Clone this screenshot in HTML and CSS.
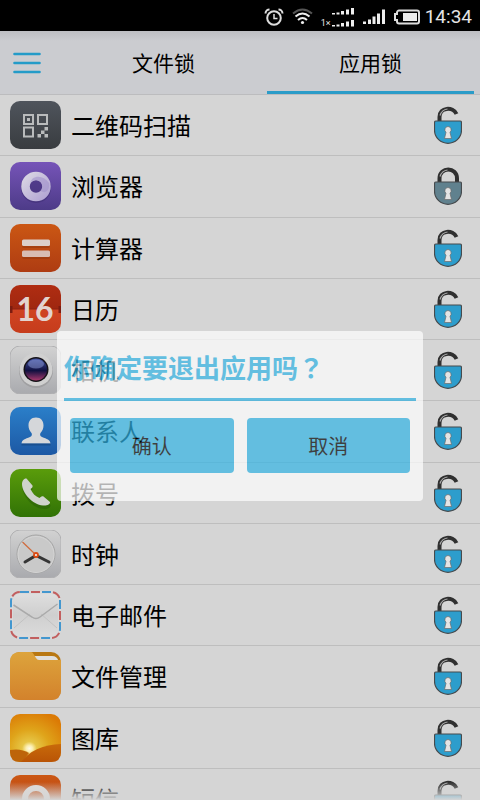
FILE: index.html
```
<!DOCTYPE html>
<html lang="zh-CN">
<head>
    <meta charset="UTF-8">
    <meta name="viewport" content="width=device-width, initial-scale=1.0">
    <title>应用锁</title>
    <link rel="stylesheet" href="styles.css">
</head>
<body>
    <div class="screen">
        <div class="status-bar">
            <svg class="status-alarm" width="20" height="18" viewBox="0 0 20 18" fill="none" stroke="#ddd" stroke-width="2">
                <circle cx="10" cy="10" r="6.8"/>
                <path d="M10 6v4.5h3.5" stroke-width="1.5"/>
                <path d="M1.5 5.5C1.5 3 3.5 1.5 5.5 1.5M18.5 5.5C18.5 3 16.5 1.5 14.5 1.5"/>
            </svg>
            <svg class="status-wifi" width="21" height="17" viewBox="0 0 21 17" fill="none" stroke="#eee" stroke-width="2">
                <path d="M1 5.5Q10.5-2.5 20 5.5" stroke="#555"/>
                <path d="M3.5 8.5Q10.5 2.5 17.5 8.5"/>
                <path d="M6 12Q10.5 8 15 12"/>
                <circle cx="10.5" cy="14.5" r="1.6" fill="#eee" stroke="none"/>
            </svg>
            <div class="dual-signal">
                <span class="network">1×</span>
                <svg width="24" height="20" viewBox="0 0 24 20" fill="#eee">
                    <path d="M1 6h3v1.5H1zM5.5 5.5h3v2h-3zM10 4h3v3.5h-3zM15 2.5h3v5h-3zM20 1h3v6.5h-3z"/>
                    <path d="M1 18h3v1.5H1zM5.5 17.5h3v2h-3zM10 16h3v3.5h-3zM15 14.5h3v5h-3zM20 13h3v6.5h-3z"/>
                </svg>
            </div>
            <svg class="status-signal" width="23" height="17" viewBox="0 0 23 17" fill="#eee">
                <path d="M0 13.5h3V16H0zM5 11.5h3V16H5zM9.5 8.5h3V16h-3zM14 5.5h3V16h-3zM19 1.5h3V16h-3z"/>
            </svg>
            <svg class="status-battery" width="26" height="16" viewBox="0 0 26 16">
                <path d="M5 1.5h18a2 2 0 0 1 2 2v9a2 2 0 0 1-2 2H5a2 2 0 0 1-2-2V11H1V5h2V3.5a2 2 0 0 1 2-2z" fill="none" stroke="#ddd" stroke-width="2"/>
                <path d="M9 4h14v8H9z" fill="#eee"/>
            </svg>
            <span class="clock">14:34</span>
        </div>

        <header class="header">
            <button class="menu-btn" type="button" aria-label="菜单">
                <svg width="28" height="22" viewBox="0 0 28 22" stroke="#249bc8" stroke-width="2.6" stroke-linecap="round">
                    <path d="M1.5 2h25M1.5 11h25M1.5 20h25"/>
                </svg>
            </button>
            <nav class="tabs">
                <button class="tab" type="button">文件锁</button>
                <button class="tab active" type="button">应用锁</button>
            </nav>
        </header>

        <main class="content">
            <ul class="app-list">
                <li class="app">
                    <svg class="app-icon" viewBox="0 0 51 48">
                        <rect class="tile" fill="url(#g-scan)"/>
                        <g fill="none" stroke="#b9bbbc" stroke-width="2">
                            <path d="M14 14h9v9h-9zM28 14h9v9h-9zM14 26.5h9v9h-9z"/>
                        </g>
                        <path d="M17 17h3v3h-3zM34.5 26H38v3.500h-3.500zM31 29.500h3.500V33H31zM27.500 33H31v3.500h-3.500zM34.500 33H38v3.500h-3.500z" fill="#b9bbbc"/>
                    </svg>
                    <span class="app-name">二维码扫描</span>
                    <button class="lock" type="button" aria-label="加锁"><svg viewBox="0 0 28 38"><use href="#unlocked"/></svg></button>
                </li>
                <li class="app">
                    <svg class="app-icon" viewBox="0 0 51 48">
                        <rect class="tile" fill="url(#g-browser)"/>
                        <circle cx="26" cy="26" r="15" fill="#3b2b70" opacity=".5"/>
                        <circle cx="26" cy="24.500" r="10.500" fill="none" stroke="url(#g-ring)" stroke-width="8.500"/>
                        <path d="M20 22C21 13 33 12 39 21C40 29 35 32 30.500 29C34 25 32 18 26 18C23 18 21 19 20 22z" fill="#a293cc" opacity=".6"/>
                    </svg>
                    <span class="app-name">浏览器</span>
                    <button class="lock" type="button" aria-label="解锁"><svg viewBox="0 0 28 38"><use href="#locked"/></svg></button>
                </li>
                <li class="app">
                    <svg class="app-icon" viewBox="0 0 51 48">
                        <rect class="tile" fill="url(#g-calc)"/>
                        <rect x="12" y="17" width="28" height="7" rx="2" fill="#8f3510" opacity=".5"/>
                        <rect x="12" y="28" width="28" height="7" rx="2" fill="#8f3510" opacity=".5"/>
                        <rect x="12" y="15.500" width="28" height="6.500" rx="1.500" fill="#dccfca"/>
                        <rect x="12" y="26.500" width="28" height="6.500" rx="1.500" fill="#d8bcb3"/>
                    </svg>
                    <span class="app-name">计算器</span>
                    <button class="lock" type="button" aria-label="加锁"><svg viewBox="0 0 28 38"><use href="#unlocked"/></svg></button>
                </li>
                <li class="app">
                    <svg class="app-icon" viewBox="0 0 51 48">
                        <rect class="tile" fill="url(#g-calendar)"/>
                        <path d="M0 24h51" stroke="#8d2212"/>
                        <path d="M0 21h2.500v7H0zM48.500 21H51v7h-2.500z" fill="#7c1c10"/>
                        <text class="calendar-day" x="25" y="36">16</text>
                    </svg>
                    <span class="app-name">日历</span>
                    <button class="lock" type="button" aria-label="加锁"><svg viewBox="0 0 28 38"><use href="#unlocked"/></svg></button>
                </li>
                <li class="app">
                    <svg class="app-icon" viewBox="0 0 51 48">
                        <rect class="tile" fill="url(#g-silver)" stroke="#b0b0b2"/>
                        <circle cx="26" cy="25" r="17" fill="#a0a0a2"/>
                        <circle cx="26" cy="23.500" r="16.500" fill="#d0d0d0"/>
                        <circle cx="26" cy="23.500" r="12.500" fill="#151218"/>
                        <circle cx="26" cy="23.500" r="11" fill="url(#g-lens)"/>
                        <ellipse cx="26" cy="18" rx="8" ry="4.500" fill="#8d9bd8" opacity=".5"/>
                    </svg>
                    <span class="app-name">相机</span>
                    <button class="lock" type="button" aria-label="加锁"><svg viewBox="0 0 28 38"><use href="#unlocked"/></svg></button>
                </li>
                <li class="app">
                    <svg class="app-icon" viewBox="0 0 51 48">
                        <rect class="tile" fill="url(#g-contacts)"/>
                        <path d="M26 10.500c5 0 7.500 3.500 7.500 8 0 3-1 5-3 7.500-.8 1.500-.5 3 1.500 4 5 2 8 2.500 8.500 6.500h-29c.500-4 3.500-4.500 8.500-6.500 2-1 2.300-2.500 1.500-4-2-2.500-3-4.500-3-7.500 0-4.500 2.500-8 7.500-8z" fill="#d5d7da"/>
                        <path d="M11.500 37.500h29" stroke="#15447e" stroke-width="2" opacity=".6"/>
                    </svg>
                    <span class="app-name">联系人</span>
                    <button class="lock" type="button" aria-label="加锁"><svg viewBox="0 0 28 38"><use href="#unlocked"/></svg></button>
                </li>
                <li class="app">
                    <svg class="app-icon" viewBox="0 0 51 48">
                        <rect class="tile" fill="url(#g-phone)"/>
                        <path d="M17 11l5.500 8c.5 1-.5 2-2 3.500 2 4.500 5 7.500 9.500 9.500 1.500-1.500 3-2.500 4-2l6.500 6c.5 2-2 4-6 4C23 40 12 27 12 17c0-3 2.500-6 5-6z" fill="#245808" opacity=".4"/>
                        <path d="M16.500 9.500l6 7c.5 1.500-.5 2.500-2 3.500 2 4.500 5 7.500 9 9 1.500-1.500 3-2 4-1.500l6.500 5.500c.5 2-3 4-7 3.500C22.500 35.500 12 24 12 15c0-3 2-6 4.500-5.500z" fill="#cfd3cc"/>
                    </svg>
                    <span class="app-name">拨号</span>
                    <button class="lock" type="button" aria-label="加锁"><svg viewBox="0 0 28 38"><use href="#unlocked"/></svg></button>
                </li>
                <li class="app">
                    <svg class="app-icon" viewBox="0 0 51 48">
                        <rect class="tile" fill="url(#g-silver)" stroke="#b0b0b2"/>
                        <circle cx="26" cy="24" r="19" fill="#c9c9c9" stroke="#a4a4a4"/>
                        <circle cx="26" cy="24.500" r="18" fill="none" stroke="#d4d4d4"/>
                        <path d="M15 32l11-6.500L39 32" fill="none" stroke="#353535" stroke-width="3" stroke-linecap="round"/>
                        <path d="M12.500 12L26 25" stroke="#d06a3c" stroke-width="1.200"/>
                        <circle cx="26" cy="25" r="2" fill="#eee" stroke="#dc4a12" stroke-width="1.800"/>
                    </svg>
                    <span class="app-name">时钟</span>
                    <button class="lock" type="button" aria-label="加锁"><svg viewBox="0 0 28 38"><use href="#unlocked"/></svg></button>
                </li>
                <li class="app">
                    <svg class="app-icon" viewBox="0 0 51 48">
                        <rect class="tile" fill="#d9d9d9"/>
                        <rect x="1" y="1" width="49" height="46" rx="9" fill="none" stroke="#4397cf" stroke-width="2" stroke-dasharray="9 13"/>
                        <rect x="1" y="1" width="49" height="46" rx="9" fill="none" stroke="#c25f5f" stroke-width="2" stroke-dasharray="9 13" stroke-dashoffset="-11"/>
                        <rect x="3" y="3" width="45" height="42" rx="7" fill="url(#g-mail)"/>
                        <path d="M4 37l16-14M47 37L31 23" stroke="#c2c2c2" fill="none"/>
                        <path d="M3.500 14L22 26q4 3 8 0L47.500 13" fill="none" stroke="#aaa" stroke-width="1.500"/>
                    </svg>
                    <span class="app-name">电子邮件</span>
                    <button class="lock" type="button" aria-label="加锁"><svg viewBox="0 0 28 38"><use href="#unlocked"/></svg></button>
                </li>
                <li class="app">
                    <svg class="app-icon" viewBox="0 0 51 48">
                        <rect class="tile" fill="#b97812"/>
                        <path d="M23 4h19q5 0 6.500 5H23z" fill="#e0dfdc"/>
                        <path d="M10 0h11q1.500 0 2.500 2l2.500 4q1 2 3 2h22v30q0 10-10 10H10Q0 48 0 38V10Q0 0 10 0z" fill="url(#g-folder)"/>
                    </svg>
                    <span class="app-name">文件管理</span>
                    <button class="lock" type="button" aria-label="加锁"><svg viewBox="0 0 28 38"><use href="#unlocked"/></svg></button>
                </li>
                <li class="app">
                    <svg class="app-icon" viewBox="0 0 51 48">
                        <rect class="tile" fill="url(#g-sun)"/>
                        <path d="M0 36q11-2 19 3l-7 9h-2Q0 48 0 38z" fill="#bd6409"/>
                        <path d="M11 48Q24 31 51 30v8q0 10-10 10z" fill="url(#g-hill)"/>
                    </svg>
                    <span class="app-name">图库</span>
                    <button class="lock" type="button" aria-label="加锁"><svg viewBox="0 0 28 38"><use href="#unlocked"/></svg></button>
                </li>
                <li class="app">
                    <svg class="app-icon" viewBox="0 0 51 48">
                        <rect class="tile" fill="url(#g-calc)"/>
                        <circle cx="26" cy="24" r="11" fill="none" stroke="#dddad8" stroke-width="6"/>
                    </svg>
                    <span class="app-name">短信</span>
                    <button class="lock" type="button" aria-label="加锁"><svg viewBox="0 0 28 38"><use href="#unlocked"/></svg></button>
                </li>
            </ul>
        </main>

        <div class="fade"></div>

        <div class="overlay">
            <div class="dialog" role="dialog" aria-labelledby="dialog-title">
                <h1 class="dialog-title" id="dialog-title">你确定要退出应用吗<span class="mark" lang="zh-TW">？</span></h1>
                <div class="dialog-actions">
                    <button class="dialog-btn" type="button">确认</button>
                    <button class="dialog-btn" type="button">取消</button>
                </div>
            </div>
        </div>
    </div>

    <!-- shared gradients and lock shapes -->
    <svg class="defs" aria-hidden="true">
        <defs>
            <linearGradient id="g-scan" x2="0" y2="1"><stop stop-color="#4f545c"/><stop offset="1" stop-color="#393c40"/></linearGradient>
            <linearGradient id="g-browser" x2="0" y2="1"><stop stop-color="#7654b8"/><stop offset="1" stop-color="#4d3b88"/></linearGradient>
            <linearGradient id="g-ring" x2="1" y2="1"><stop stop-color="#d8d4e2"/><stop offset="1" stop-color="#b3a6d4"/></linearGradient>
            <linearGradient id="g-calc" x2="0" y2="1"><stop stop-color="#cb5714"/><stop offset="1" stop-color="#ae3c12"/></linearGradient>
            <linearGradient id="g-calendar" x2="0" y2="1"><stop stop-color="#b02d12"/><stop offset=".5" stop-color="#9f2710"/><stop offset=".5" stop-color="#d04422"/><stop offset="1" stop-color="#c63c1c"/></linearGradient>
            <linearGradient id="g-silver" x2="0" y2="1"><stop stop-color="#d2d2d2"/><stop offset="1" stop-color="#a9aaae"/></linearGradient>
            <linearGradient id="g-lens" x2="0" y2="1"><stop stop-color="#4252a0"/><stop offset=".55" stop-color="#101040"/><stop offset="1" stop-color="#a8386c"/></linearGradient>
            <linearGradient id="g-contacts" x2="0" y2="1"><stop stop-color="#2b7fc9"/><stop offset="1" stop-color="#1c58a4"/></linearGradient>
            <linearGradient id="g-phone" x2="0" y2="1"><stop stop-color="#5a9c0b"/><stop offset="1" stop-color="#317206"/></linearGradient>
            <linearGradient id="g-mail" x2="0" y2="1"><stop stop-color="#dedede"/><stop offset=".5" stop-color="#cfcfcf"/><stop offset="1" stop-color="#dbdbdb"/></linearGradient>
            <linearGradient id="g-folder" x2="0" y2="1"><stop stop-color="#dda43c"/><stop offset="1" stop-color="#d3822c"/></linearGradient>
            <linearGradient id="g-hill" x2="0" y2="1"><stop stop-color="#c86a0a"/><stop offset="1" stop-color="#b95406"/></linearGradient>
            <radialGradient id="g-sun" cx=".38" cy=".72" r=".8"><stop stop-color="#fffbe8"/><stop offset=".08" stop-color="#fbeeb0"/><stop offset=".18" stop-color="#e6c545"/><stop offset=".5" stop-color="#dfa41a"/><stop offset="1" stop-color="#db7a05"/></radialGradient>
            <path id="lock-body" d="M2 15h24q1.500 0 1.500 1.500V24C27.500 32 21 37.300 14 37.300S.5 32 .5 24v-7.500Q.5 15 2 15z"/>
            <path id="keyhole" d="M14 20.500a3.300 3.300 0 0 1 2 5.800l1.500 6.200h-7l1.500-6.200A3.300 3.300 0 0 1 14 20.500z"/>
            <g id="unlocked">
                <path d="M5.500 15v-4C5.500 1 19 .5 22.500 8" fill="none" stroke="#303030" stroke-width="4"/>
                <path d="M6 9.500Q8 3.500 13.500 3" fill="none" stroke="#aaa" stroke-width="1.200"/>
                <use href="#lock-body" fill="#2d9dcc" stroke="#464a4d" stroke-width="1.200"/>
                <use href="#keyhole" fill="#e4e4e4" stroke="#6a6a6a" stroke-width=".7"/>
            </g>
            <g id="locked">
                <path d="M5.500 15v-3.500C5.500-.5 23-.5 23 11.500V15" fill="none" stroke="#303030" stroke-width="4"/>
                <path d="M6 9.500Q8 3.500 13.500 3" fill="none" stroke="#aaa" stroke-width="1.200"/>
                <use href="#lock-body" fill="#60818e" stroke="#464a4d" stroke-width="1.200"/>
                <use href="#keyhole" fill="#e4e4e4" stroke="#6a6a6a" stroke-width=".7"/>
            </g>
        </defs>
    </svg>
</body>
</html>
```
FILE: styles.css
```
* {
    box-sizing: border-box;
}
body {
    margin: 0;
    font-family: "Noto Sans CJK SC", sans-serif;
    background: #d5d5d5;
    color: #000;
}
button {
    margin: 0;
    padding: 0;
    border: none;
    background: none;
    color: inherit;
    font-family: inherit;
    cursor: pointer;
}
svg {
    display: block;
}
.screen {
    position: relative;
    display: flex;
    flex-direction: column;
    height: 100vh;
    overflow: hidden;
}

/* status bar */
.status-bar {
    display: flex;
    flex: none;
    align-items: center;
    justify-content: flex-end;
    gap: 8px;
    height: 31px;
    padding: 2px 8px 0 0;
    background: #000;
    color: #e4e4e4;
    font-family: Roboto, sans-serif;
}
.dual-signal {
    display: flex;
    align-items: flex-end;
}
.network {
    font-size: 9px;
    line-height: 8px;
}
.clock {
    margin-left: -3px;
    font-size: 19px;
}

/* header */
.header {
    display: flex;
    flex: none;
    height: 64px;
    padding-right: 6px;
    border-bottom: 1px solid #bcbcbe;
    background: linear-gradient(#bdbec2, #cbccd0 10px);
}
.menu-btn {
    display: flex;
    align-items: center;
    width: 60px;
    padding-left: 13px;
}
.tabs {
    display: flex;
    flex: 1;
}
.tab {
    flex: 1;
    padding-top: 1px;
    border-bottom: 3px solid transparent;
    font-size: 21px;
}
.tab.active {
    border-bottom-color: #2b9cc8;
}

/* app list */
.content {
    flex: 1;
    min-height: 0;
    overflow: hidden;
}
.app-list {
    display: grid;
    grid-auto-rows: 1fr;
    min-height: 735px;
    margin: 0;
    padding: 0;
    list-style: none;
}
.app {
    display: flex;
    align-items: center;
    gap: 10px;
    padding: 0 18px 0 10px;
    border-bottom: 1px solid #bebebe;
}
.app-icon {
    flex: none;
    width: 51px;
    height: 48px;
}
.tile {
    width: 51px;
    height: 48px;
    rx: 10px;
}
.calendar-day {
    fill: #e2d3cf;
    font-family: Lato, sans-serif;
    font-size: 32px;
    font-weight: bold;
    text-anchor: middle;
}
.app-name {
    flex: 1;
    font-size: 24px;
    line-height: 36px;
}
.lock svg {
    width: 28px;
    height: 38px;
}
.fade {
    position: absolute;
    right: 0;
    bottom: 0;
    left: 0;
    height: 18px;
    background: linear-gradient(rgba(213, 213, 213, 0), #d5d5d5);
}

/* dialog */
.overlay {
    position: absolute;
    top: 31px;
    right: 0;
    bottom: 0;
    left: 0;
    display: flex;
    align-items: center;
    padding: 0 57px;
}
.dialog {
    flex: 1;
    padding: 0 7px 28px;
    border-radius: 4px;
    background: #fff;
    opacity: 0.7;
}
.dialog-title {
    margin: 0;
    padding: 17px 0 12px;
    border-bottom: 3px solid #33b5e5;
    color: #33b5e5;
    font-size: 26px;
    font-weight: bold;
    line-height: 38px;
}
.mark {
    font-family: "Noto Sans CJK TC", sans-serif;
}
.dialog-actions {
    display: flex;
    gap: 13px;
    padding: 17px 6px 0;
}
.dialog-btn {
    flex: 1;
    height: 55px;
    border-radius: 4px;
    background: #33b5e5;
    font-size: 20px;
}
.defs {
    position: absolute;
    width: 0;
    height: 0;
}
```
